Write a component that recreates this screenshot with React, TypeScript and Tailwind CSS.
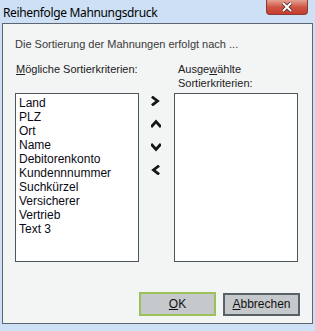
import React from "react";

const items = [
  "Land",
  "PLZ",
  "Ort",
  "Name",
  "Debitorenkonto",
  "Kundennnummer",
  "Suchkürzel",
  "Versicherer",
  "Vertrieb",
  "Text 3",
];

function Chevron({ dir }: { dir: "right" | "up" | "down" | "left" }) {
  const paths: Record<string, string> = {
    right: "M2 1.5 L6.5 5 L2 8.5",
    left: "M7 1.5 L2.5 5 L7 8.5",
    up: "M1 7 L5 2.5 L9 7",
    down: "M1 3 L5 7.5 L9 3",
  };
  return (
    <svg width="10" height="10" viewBox="0 0 10 10">
      <path d={paths[dir]} fill="none" stroke="#151515" strokeWidth="2.8" strokeLinecap="square" />
    </svg>
  );
}

export default function App() {
  return (
    <div
      className="w-[315px] h-[331px] bg-[#cde0f5] flex flex-col"
      style={{ fontFamily: '"Liberation Sans", Arial, sans-serif' }}
    >
      {/* title bar */}
      <div className="h-[23px] flex items-start justify-between pl-[3px] pr-[7px]">
        <span
          className="text-[12px] leading-[16px] mt-[5px] text-black tracking-[-0.35px]"
          style={{ fontFamily: '"Noto Sans", "Open Sans", sans-serif' }}
        >
          Reihenfolge Mahnungsdruck
        </span>
        <div className="w-[42px] h-[15px] rounded-b-[4px] border border-t-0 border-[#8a3a34] bg-gradient-to-b from-[#e4a193] via-[#cf5544] to-[#c43c2d] flex items-center justify-center">
          <svg width="12" height="10" viewBox="0 0 12 10">
            <path d="M2 1 L10 9 M10 1 L2 9" stroke="#4a2a2a" strokeWidth="3.6" />
            <path d="M2 1 L10 9 M10 1 L2 9" stroke="#ffffff" strokeWidth="2" />
          </svg>
        </div>
      </div>

      {/* content */}
      <div className="mx-[2px] mb-[7px] flex-1 border border-[#5c6570] bg-[#f3f4f4] flex flex-col pl-[12px] pr-[12px] pt-[14px] pb-[7px]">
        <p className="text-[11px] leading-[13px] text-[#3a3a3a]">
          Die Sortierung der Mahnungen erfolgt nach ...
        </p>

        <div className="grid grid-cols-[124px_35px_124px] mt-[10px]">
          <div className="text-[11px] leading-[14px] text-[#222] pl-[1px] pt-[1px]">
            <span className="underline">M</span>ögliche Sortierkriterien:
          </div>
          <div />
          <div className="text-[11px] leading-[14px] text-[#222] pl-[4px] pt-[1px]">
            Ausge<span className="underline">w</span>ählte
            <br />
            Sortierkriterien:
          </div>

          <div className="mt-[3px] h-[169px] border border-[#4c545c] bg-white pt-[2px] pl-[3px]">
            {items.map((it) => (
              <div key={it} className="text-[12px] leading-[14px] text-[#0a0a14]">
                {it}
              </div>
            ))}
          </div>
          <div className="mt-[3px] flex flex-col items-start pl-[12px] pt-[3px] gap-[13px]">
            <Chevron dir="right" />
            <Chevron dir="up" />
            <Chevron dir="down" />
            <Chevron dir="left" />
          </div>
          <div className="mt-[3px] h-[169px] border border-[#4c545c] bg-white" />
        </div>

        {/* buttons */}
        <div className="mt-auto flex justify-end items-center gap-[7px]">
          <button className="w-[77px] h-[24px] border-2 border-[#9dc05a] bg-[#c5c9cc] text-[12px] text-[#111]">
            <span className="underline">O</span>K
          </button>
          <button className="w-[77px] h-[23px] border-2 border-[#5a6068] bg-[#c5c9cc] text-[12px] text-[#111]">
            <span className="underline">A</span>bbrechen
          </button>
        </div>
      </div>
    </div>
  );
}
